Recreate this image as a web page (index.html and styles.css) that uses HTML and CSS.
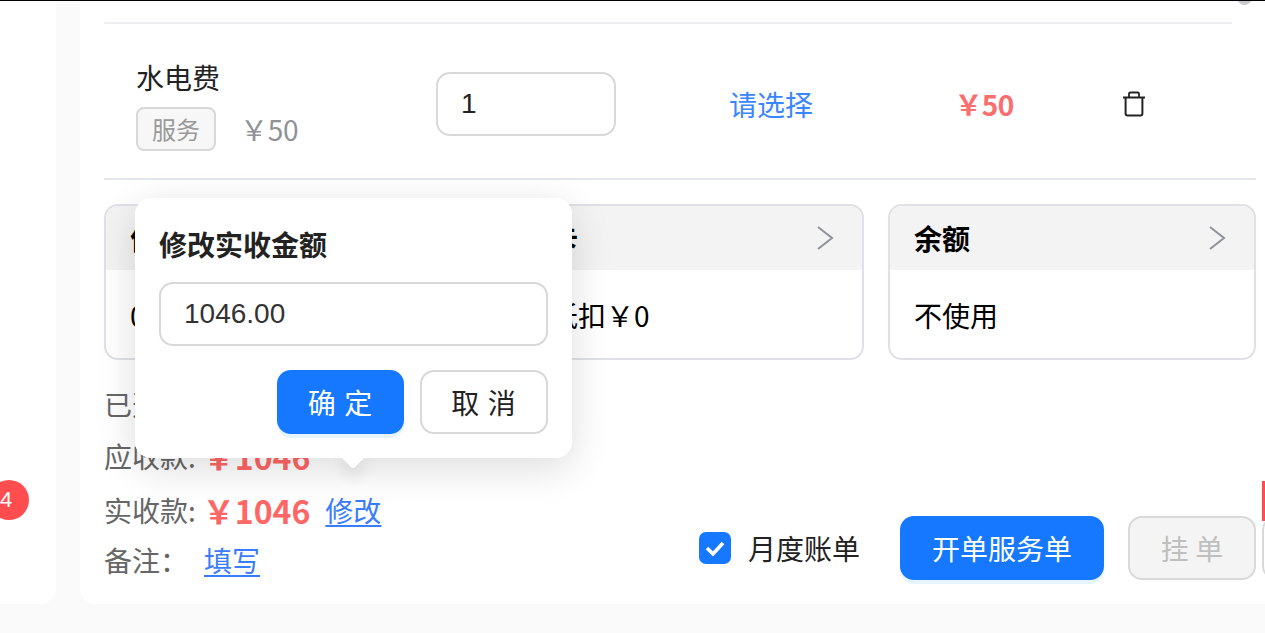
FILE: index.html
```html
<!DOCTYPE html>
<html lang="zh-CN">
<head>
<meta charset="utf-8">
<title>开单</title>
<link rel="stylesheet" href="styles.css">
</head>
<body>
<div class="page">
  <aside class="side">
    <span class="side-badge">4</span>
  </aside>
  <main class="main">
    <span class="scroll-thumb"></span>
    <div class="list-top"></div>
    <section class="item">
      <div class="item-name">
        <div class="name">水电费</div>
        <div class="meta"><span class="tag">服务</span><span class="unit">￥50</span></div>
      </div>
      <div class="qty">1</div>
      <a class="pick">请选择</a>
      <div class="price">￥50</div>
      <div class="trash">
        <svg width="24" height="26" viewBox="0 0 24 26" fill="none" stroke="#222" stroke-width="2">
          <path d="M1 6.5h22"/>
          <path d="M7 6V2.8Q7 1.5 8.3 1.5h7.4Q17 1.5 17 2.8V6" stroke-width="1.8"/>
          <path d="M3.6 6.5V22.5Q3.6 24.5 5.6 24.5h12.8Q20.4 24.5 20.4 22.5V6.5"/>
        </svg>
      </div>
    </section>
    <section class="cards">
      <div class="card">
        <div class="card-head"><span>优惠券</span><svg class="chev" width="18" height="26" viewBox="0 0 18 26"><path d="M2 2l14 11L2 24" fill="none" stroke="#8f9297" stroke-width="2"/></svg></div>
        <div class="card-body">0张可用</div>
      </div>
      <div class="card">
        <div class="card-head"><span>次卡</span><svg class="chev" width="18" height="26" viewBox="0 0 18 26"><path d="M2 2l14 11L2 24" fill="none" stroke="#8f9297" stroke-width="2"/></svg></div>
        <div class="card-body">可抵扣￥0</div>
      </div>
      <div class="card">
        <div class="card-head"><span>余额</span><svg class="chev" width="18" height="26" viewBox="0 0 18 26"><path d="M2 2l14 11L2 24" fill="none" stroke="#8f9297" stroke-width="2"/></svg></div>
        <div class="card-body">不使用</div>
      </div>
    </section>
    <section class="footer">
      <div class="summary">
        <div class="sum-row sum-first"><span class="sum-label">已选择：</span></div>
        <div class="sum-row sum-amount"><span class="sum-label">应收款:</span><span class="amount">￥1046</span></div>
        <div class="sum-row sum-amount sum-paid"><span class="sum-label">实收款:</span><span class="amount">￥1046</span><a class="link edit">修改</a></div>
        <div class="sum-row sum-note"><span class="sum-label note-label">备注：</span><a class="link">填写</a></div>
      </div>
      <div class="actions">
        <label class="check">
          <span class="check-box">
            <svg width="22" height="18" viewBox="0 0 22 18"><path d="M3 9l6 6L19 4" fill="none" stroke="#fff" stroke-width="3.6"/></svg>
          </span>
          <span>月度账单</span>
        </label>
        <button class="btn btn-primary btn-open">开单服务单</button>
        <button class="btn btn-disabled">挂 单</button>
        <span class="next-wrap">
          <span class="next-badge"></span>
          <button class="btn btn-next"></button>
        </span>
      </div>
    </section>
    <div class="popover">
      <h3 class="pop-title">修改实收金额</h3>
      <div class="pop-input">1046.00</div>
      <div class="pop-buttons">
        <button class="btn btn-primary btn-pop">确 定</button>
        <button class="btn btn-cancel btn-pop">取 消</button>
      </div>
    </div>
  </main>
</div>
</body>
</html>
```

FILE: styles.css
```css
* { box-sizing: border-box; }

html, body {
  margin: 0;
  height: 100%;
  overflow: hidden;
  background: #fafafa;
}

body {
  font-family: "Noto Sans CJK SC", "Liberation Sans", sans-serif;
  font-size: 28px;
  color: #222;
}

.page {
  display: flex;
  gap: 24px;
  height: 604px;
  border-top: 1px solid #000;
}

.side {
  position: relative;
  width: 56px;
  flex: none;
  background: #fff;
  border-bottom-right-radius: 16px;
}

.side-badge {
  position: absolute;
  left: -11px;
  top: 479px;
  width: 40px;
  height: 40px;
  border-radius: 20px;
  background: #ff4d4f;
  color: #fff;
  font-family: "Liberation Sans", sans-serif;
  font-size: 22px;
  line-height: 40px;
  text-align: center;
  text-indent: -6px;
}

.main {
  position: relative;
  flex: 1;
  min-width: 0;
  padding: 0 9px 0 24px;
  background: #fff;
  border-bottom-left-radius: 16px;
  overflow: hidden;
}

.scroll-thumb {
  position: absolute;
  left: 1157px;
  top: -11px;
  width: 15px;
  height: 15px;
  border-radius: 50%;
  background: #c8c9cc;
}

.list-top {
  margin: 21px 24px 0 0;
  height: 2px;
  background: #eeeff1;
}

.item {
  display: grid;
  grid-template-columns: 332px 180px 310px 118px 180px;
  align-items: center;
  height: 156px;
  padding-top: 5px;
  border-bottom: 2px solid #e3e6eb;
}

.item-name { padding-left: 32px; }

.name {
  line-height: 40px;
  color: #222;
}

.meta {
  display: flex;
  align-items: center;
  gap: 24px;
  margin-top: 10px;
}

.tag {
  width: 80px;
  height: 44px;
  border: 2px solid #d8d8d8;
  border-radius: 8px;
  background: #f7f7f7;
  color: #999;
  font-size: 24px;
  line-height: 40px;
  text-align: center;
}

.unit { color: #8f9297; font-size: 28px; letter-spacing: -.3px; }

.qty {
  height: 64px;
  padding-left: 23px;
  border: 2px solid #d8d8d8;
  border-radius: 14px;
  font-family: "Liberation Sans", sans-serif;
  font-size: 28px;
  line-height: 60px;
  color: #222;
}

.pick {
  color: #3a86ff;
  text-align: center;
}

.price {
  color: #fb6e6e;
  font-weight: 700;
  font-size: 28px;
  line-height: 36px;
  padding-right: 2px;
  text-align: center;
  letter-spacing: -.7px;
}

.trash {
  display: flex;
  justify-content: center;
}

.cards {
  display: flex;
  gap: 24px;
  margin-top: 24px;
}

.card {
  width: 368px;
  height: 156px;
  border: 2px solid #dfe1e6;
  border-radius: 14px;
  overflow: hidden;
  color: #000;
}

.card-head {
  display: flex;
  align-items: center;
  justify-content: space-between;
  height: 64px;
  padding: 0 28px 0 24px;
  background: #f3f3f4;
  font-weight: 700;
}

.card-body {
  padding-left: 24px;
  height: 90px;
  line-height: 90px;
}

.footer {
  display: flex;
  justify-content: space-between;
  align-items: flex-end;
}

.summary {
  display: flex;
  flex-direction: column;
  padding-top: 24px;
  color: #666;
}

.sum-row {
  display: flex;
  align-items: center;
  height: 40px;
  line-height: 40px;
}

.sum-amount { height: 44px; margin-top: 10px; }
.sum-paid { margin-top: 10px; }
.sum-note { margin-top: 9px; height: 38px; }

.sum-label { color: #666; }
.note-label { width: 100px; }

.amount {
  margin-left: 7px;
  color: #f66;
  font-size: 32px;
  font-weight: 700;
}

.link {
  color: #3a7cff;
  text-decoration: underline;
  text-underline-offset: 3px;
}

.edit { margin-left: 15px; }

.actions {
  display: flex;
  align-items: center;
  margin-bottom: -1px;
  margin-right: -9px;
  position: relative;
}

.check {
  display: flex;
  align-items: center;
  gap: 17px;
  margin-right: 40px;
  color: #222;
}

.check-box {
  display: flex;
  align-items: center;
  justify-content: center;
  width: 32px;
  height: 32px;
  border-radius: 7px;
  background: #1677ff;
}

.btn {
  font-family: inherit;
  font-size: 28px;
  height: 64px;
  border-radius: 14px;
  padding: 0;
  border: 0;
  line-height: 60px;
}

.btn-primary {
  background: #1677ff;
  color: #fff;
  box-shadow: 0 4px 0 #e6f4ff;
}

.btn-open { width: 204px; }

.btn-disabled {
  width: 128px;
  margin-left: 24px;
  background: #f4f4f4;
  border: 2px solid #d9d9d9;
  color: #bfbfbf;
}

.next-wrap {
  position: relative;
  margin-left: 6px;
  display: block;
  width: 3px;
  height: 64px;
}

.btn-next {
  display: block;
  width: 128px;
  background: #fff;
  border: 2px solid #d9d9d9;
}

.next-badge {
  position: absolute;
  z-index: 1;
  left: 0;
  top: -35px;
  width: 40px;
  height: 40px;
  background: #ff4d4f;
}

.popover {
  position: absolute;
  z-index: 5;
  left: 55px;
  top: 197px;
  width: 437px;
  height: 260px;
  padding: 24px 24px 0 24px;
  background: #fff;
  border-radius: 16px;
  box-shadow: 0 10px 40px rgba(0, 0, 0, .14);
}

.popover::after {
  content: "";
  position: absolute;
  left: 208px;
  bottom: -7px;
  width: 20px;
  height: 20px;
  background: #fff;
  transform: rotate(45deg);
  border-bottom-right-radius: 3px;
  box-shadow: 8px 8px 14px rgba(0, 0, 0, .07);
}

.pop-title {
  margin: 0;
  font-size: 28px;
  font-weight: 700;
  line-height: 44px;
  color: #222;
}

.pop-input {
  margin-top: 16px;
  height: 64px;
  padding-left: 23px;
  border: 2px solid #d8d8d8;
  border-radius: 14px;
  font-family: "Liberation Sans", sans-serif;
  font-size: 28px;
  line-height: 60px;
  color: #333;
}

.pop-buttons {
  display: flex;
  justify-content: flex-end;
  gap: 16px;
  margin-top: 24px;
}

.btn-pop { width: 127px; letter-spacing: 1px; }

.btn-cancel {
  width: 128px;
  background: #fff;
  border: 2px solid #d8d8d8;
  color: #222;
}
```
